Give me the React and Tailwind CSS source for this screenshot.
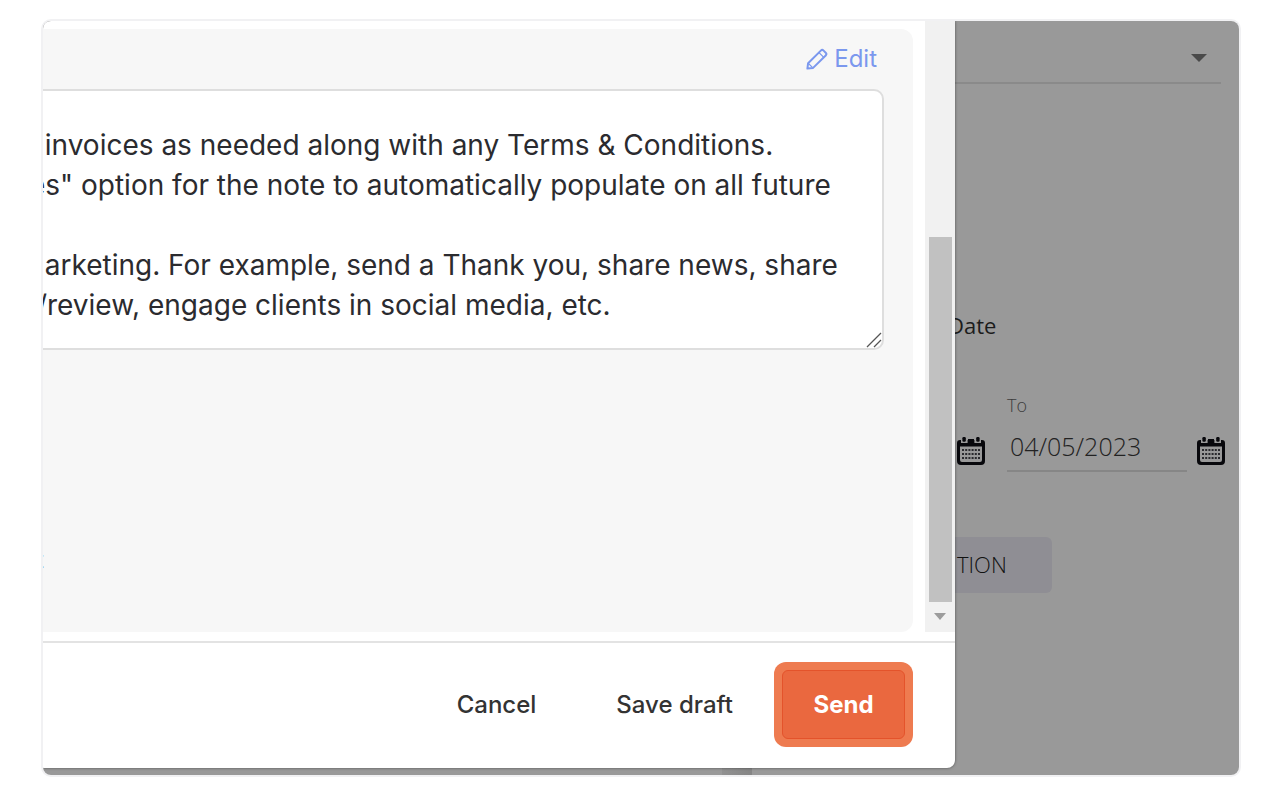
// App.jsx
import React, { useState } from 'react';

const NOTE = `  invoices as needed along with any Terms & Conditions.
es" option for the note to automatically populate on all future

  arketing. For example, send a Thank you, share news, share
 /review, engage clients in social media, etc.`;

const PencilIcon = () => (
  <svg viewBox="0 0 22 22" className="h-[22px] w-[22px]" fill="none" stroke="currentColor" strokeWidth="2" strokeLinejoin="round" aria-hidden="true">
    <path d="M1.4 20.6l.7-5.4L14.8 2.6a2 2 0 0 1 2.8 0l2.1 2.1a2 2 0 0 1 0 2.8L7.1 19.9z" />
    <path d="M13 4.6l4.8 4.8M2.4 15.4l4.2 4.2" strokeWidth="1.3" />
  </svg>
);

const CalendarIcon = () => (
  <svg viewBox="0 0 28 28" className="h-7 w-7" aria-hidden="true">
    <path fill="#08080c" d="M3 3h2.2v2.2h4V3h9.6v2.2h4V3H25a3 3 0 0 1 3 3v18a4 4 0 0 1-4 4H4a4 4 0 0 1-4-4V6a3 3 0 0 1 3-3zm0 6.5V23a2 2 0 0 0 2 2h18a2 2 0 0 0 2-2V9.5z" />
    <path fill="#999999" d="M4 2h6.6v4H4zM17.4 2H24v4h-6.6z" />
    <path fill="#08080c" d="M11 2h6v5h-6z" />
    <rect x="5.4" y="0" width="3.4" height="4.8" rx="1.2" fill="#08080c" />
    <rect x="19.2" y="0" width="3.4" height="4.8" rx="1.2" fill="#08080c" />
    <g stroke="#2a2a2e" strokeWidth="2" strokeDasharray="2 1.2">
      <path d="M5 13h18" />
      <path d="M5 17h18" />
      <path d="M5 21h18" />
    </g>
  </svg>
);

const Background = () => {
  const [date, setDate] = useState('04/05/2023');

  return (
    <div className="col-start-1 row-start-1 flex flex-col bg-[#999999] font-['Open_Sans',sans-serif]">
      <div className="ml-auto flex w-[300px] grow flex-col items-start pr-[14px]">
        <div className="flex h-[63px] w-full items-center pt-3 pr-1">
          <div className="flex h-full grow items-center border-b-2 border-[#8a8a8a]">
            <select aria-label="Filter" className="h-8 grow appearance-none bg-transparent" />
            <svg viewBox="0 0 16 8" className="mr-[14px] h-2 w-4" aria-hidden="true">
              <path d="M0 0h16L8 8z" fill="#4a4a4a" />
            </svg>
          </div>
        </div>

        <p className="mt-[225px] pl-[9px] text-[22px] leading-8 text-[#1c1c1c]">Date</p>

        <div className="mt-[52px] flex w-full items-end">
          <button type="button" aria-label="Pick start date" className="mb-[7px] ml-[18px]">
            <CalendarIcon />
          </button>
          <div className="ml-[22px] flex grow flex-col">
            <label htmlFor="date-to" className="text-[18px] leading-6 font-light text-[#3c3c3c]">To</label>
            <input
              id="date-to"
              value={date}
              onChange={(e) => setDate(e.target.value)}
              className="mt-2 h-[47px] w-full border-b-2 border-[#868686] bg-transparent px-[3px] pb-1 text-[25px] font-light text-[#222222] outline-none"
            />
          </div>
          <button type="button" aria-label="Pick end date" className="mb-[7px] ml-[10px]">
            <CalendarIcon />
          </button>
        </div>

        <button type="button" className="mt-[65px] h-14 rounded-md bg-[#8f8e94] pr-[45px] pb-[2px] pl-[18px] text-[22px] font-light text-[#111111]">
          TION
        </button>
      </div>
      <div className="mr-[487px] h-3 w-[30px] self-end bg-linear-to-r from-[#919191] to-[#858585]" />
    </div>
  );
};

const Scrollbar = () => (
  <div className="flex w-[30px] shrink-0 flex-col items-center bg-[#f1f1f1]" aria-hidden="true">
    <div className="mt-auto h-[365px] w-[23px] bg-[#c1c1c1]" />
    <svg viewBox="0 0 12 7" className="mt-[11px] mb-3 h-[7px] w-3">
      <path d="M0 0h12L6 7z" fill="#9c9c9c" />
    </svg>
  </div>
);

const InvoiceModal = () => {
  const [note, setNote] = useState(NOTE);

  return (
    <section className="z-10 col-start-1 row-start-1 mr-[284px] mb-[7px] flex flex-col overflow-hidden rounded-br-lg bg-white shadow-[0_0_3px_rgba(0,0,0,0.5)]">
      <div className="flex">
        <div className="mt-2 mr-3 flex h-[603px] min-w-0 grow flex-col overflow-hidden rounded-r-xl bg-[#f7f7f7] pr-[29px]">
          <button type="button" className="mt-[14px] mr-[7px] flex h-8 items-center gap-[6px] self-end text-[24px] text-[#7b98ee]">
            <PencilIcon />
            Edit
          </button>
          <div className="relative mt-[14px] -ml-4">
            <textarea
              aria-label="Note to client"
              value={note}
              onChange={(e) => setNote(e.target.value)}
              spellCheck={false}
              className="block h-[261px] w-full resize-none overflow-hidden rounded-[10px] border-2 border-[#dedede] bg-white pt-[34px] text-[28px] leading-10 whitespace-pre text-[#2b2b2f] outline-none"
            />
            <svg viewBox="0 0 16 16" className="absolute right-[2px] bottom-[2px] h-4 w-4" stroke="#555555" strokeWidth="1.3" aria-hidden="true">
              <path d="M1 15L15 1M8 15l7-7" />
            </svg>
          </div>
          <a href="#attachment" className="mt-[194px] -ml-[7px] self-start text-[24px] leading-8 text-[#6b7aa8]">t</a>
        </div>
        <Scrollbar />
      </div>

      <footer className="mt-[9px] flex grow items-center justify-end border-t-2 border-[#e3e3e3] pt-[19px] pr-[42px] pb-[21px] text-[24px] font-medium text-[#333333]">
        <button type="button" className="h-12">Cancel</button>
        <button type="button" className="mr-[41px] ml-[80px] h-12">Save draft</button>
        <div className="rounded-xl bg-[#ee7b50] p-2">
          <button type="button" className="h-[69px] w-[123px] rounded-md border border-[#e4532b] bg-[#ea683f] font-bold text-white">
            Send
          </button>
        </div>
      </footer>
    </section>
  );
};

const App = () => (
  <div className="bg-white px-[27px] py-[19px] pl-[41px] font-['Inter',sans-serif]">
    <main className="grid grid-cols-1 overflow-hidden rounded-[10px] border-2 border-[#f1f1f3]">
      <Background />
      <InvoiceModal />
    </main>
  </div>
);

export default App;
